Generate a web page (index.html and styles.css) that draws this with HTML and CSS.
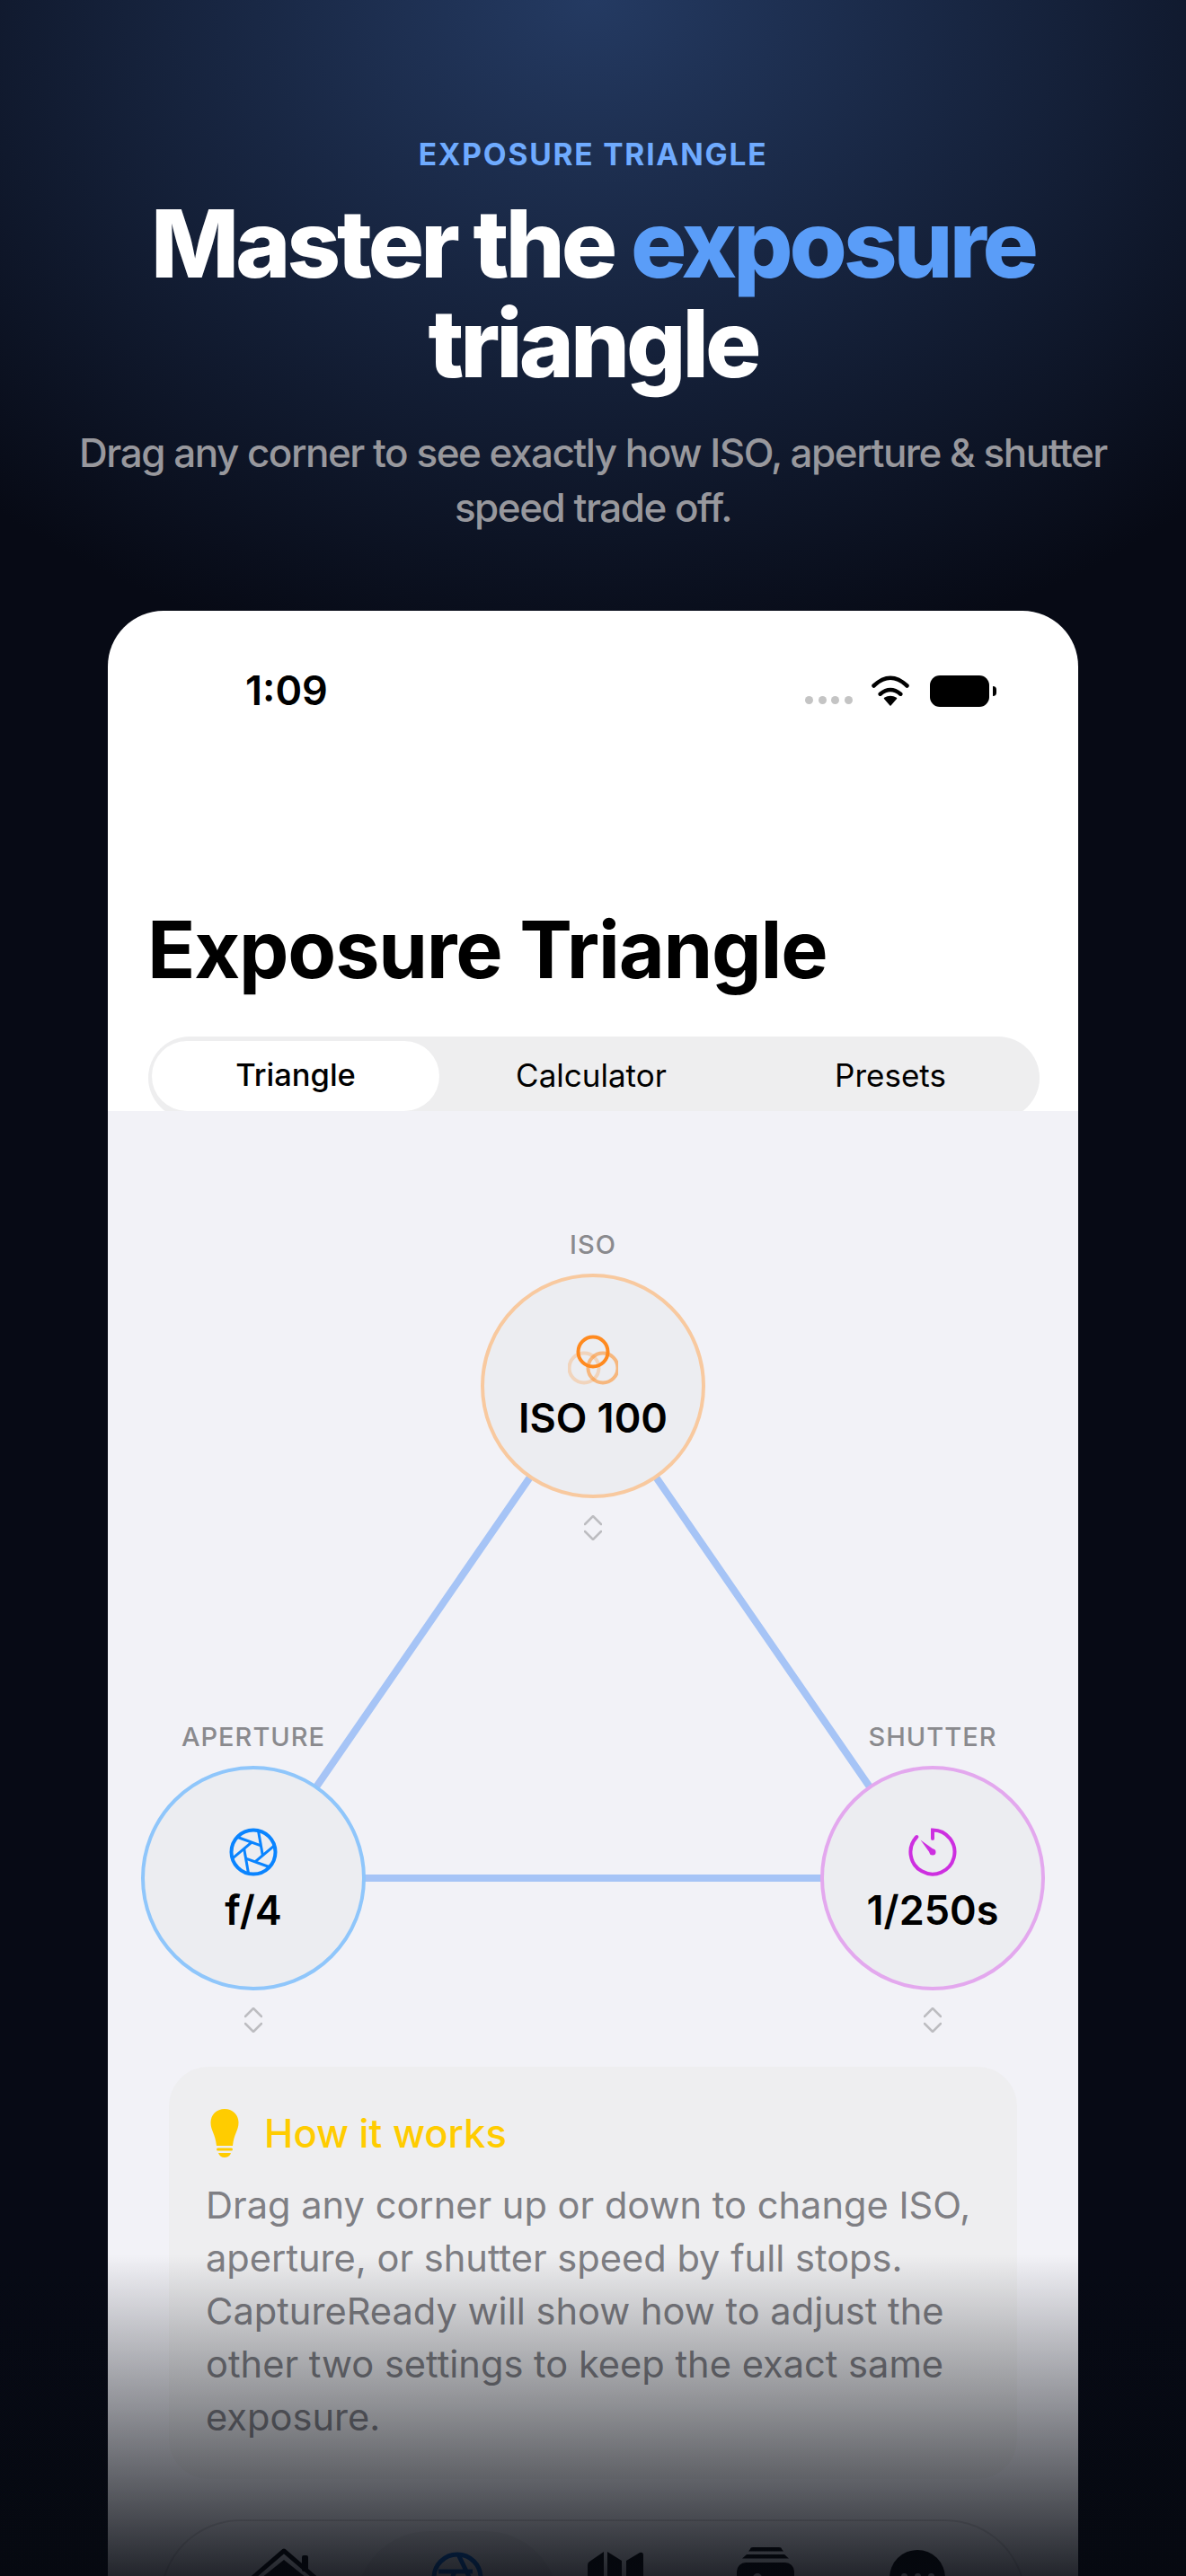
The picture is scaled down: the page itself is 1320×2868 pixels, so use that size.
FILE: index.html
```html
<!DOCTYPE html>
<html lang="en">

<head>
    <meta charset="UTF-8">
    <meta name="viewport" content="width=device-width, initial-scale=1.0">
    <title>Exposure Triangle</title>
    <link rel="stylesheet" href="styles.css">
</head>

<body>
    <div class="screen">
        <header class="hero">
            <div class="eyebrow">EXPOSURE TRIANGLE</div>
            <h1>Master the <span>exposure</span><br>triangle</h1>
            <p>Drag any corner to see exactly how ISO, aperture &amp; shutter<br>speed trade off.</p>
        </header>

        <div class="phone">
            <div class="status">
                <div class="time">1:09</div>
                <div class="status-icons">
                    <div class="dots"><i></i><i></i><i></i><i></i></div>
                    <svg class="wifi" width="44" height="36" viewBox="0 0 44 36">
                        <path d="M3.5 12.5Q22-5 40.500 12.500M10.700 21.700Q22 12.300 33.300 21.700" fill="none" stroke="#000" stroke-width="4.500" stroke-linecap="round"/>
                        <path d="M15.500 26.500Q22 22.500 28.500 26.500L22 34Z" stroke="#000" stroke-width="1.500" stroke-linejoin="round"/>
                    </svg>
                    <div class="battery"></div>
                </div>
            </div>

            <div class="page-title">Exposure Triangle</div>

            <div class="segments">
                <div class="segment seg-one active">Triangle</div>
                <div class="segment seg-two">Calculator</div>
                <div class="segment seg-three">Presets</div>
            </div>

            <div class="content">
                <div class="triangle">
                    <svg class="lines" width="1080" height="1064" viewBox="0 0 1080 1064">
                        <path d="M540 306L162 854H918Z" fill="none" stroke="#a6c4f6" stroke-width="8"/>
                    </svg>

                    <div class="node node-iso">
                        <div class="node-label">ISO</div>
                        <div class="circle">
                            <svg class="icon" width="56" height="56" viewBox="0 0 56 56" fill="none" stroke="#ff8a1f" stroke-width="4">
                                <circle cx="18" cy="37" r="16.500" opacity=".25"/>
                                <circle cx="39" cy="37" r="16.500" opacity=".55"/>
                                <circle cx="28" cy="19" r="16.500"/>
                            </svg>
                            <div class="value">ISO 100</div>
                        </div>
                        <svg class="updown" width="20" height="28" viewBox="0 0 20 28" fill="none" stroke="#bdbdc1" stroke-width="2.500" stroke-linecap="round" stroke-linejoin="round">
                            <path d="M1 10L10 1L19 10M1 18L10 27L19 18"/>
                        </svg>
                    </div>

                    <div class="node node-aperture">
                        <div class="node-label">APERTURE</div>
                        <div class="circle circle-blue">
                            <svg class="icon" width="56" height="56" viewBox="0 0 56 56" fill="none" stroke="#0a84ff" stroke-width="3">
                                <circle cx="28" cy="28" r="24.500" stroke-width="4"/>
                                <g transform="rotate(20 28 28)">
                                    <path d="M47.260 13.700L33.500 37.530"/>
                                    <path transform="rotate(60 28 28)" d="M47.260 13.700L33.500 37.530"/>
                                    <path transform="rotate(120 28 28)" d="M47.260 13.700L33.500 37.530"/>
                                    <path transform="rotate(180 28 28)" d="M47.260 13.700L33.500 37.530"/>
                                    <path transform="rotate(240 28 28)" d="M47.260 13.700L33.500 37.530"/>
                                    <path transform="rotate(300 28 28)" d="M47.260 13.700L33.500 37.530"/>
                                </g>
                            </svg>
                            <div class="value">f/4</div>
                        </div>
                        <svg class="updown" width="20" height="28" viewBox="0 0 20 28" fill="none" stroke="#bdbdc1" stroke-width="2.500" stroke-linecap="round" stroke-linejoin="round">
                            <path d="M1 10L10 1L19 10M1 18L10 27L19 18"/>
                        </svg>
                    </div>

                    <div class="node node-shutter">
                        <div class="node-label">SHUTTER</div>
                        <div class="circle circle-purple">
                            <svg class="icon" width="56" height="56" viewBox="0 0 56 56" fill="none" stroke="#cd2fe0" stroke-width="4" stroke-linecap="round">
                                <path d="M28 13V3.500A24.500 24.500 0 1 1 10.300 11"/>
                                <path d="M14.500 14.500L30.500 26L26 30.500Z" fill="#cd2fe0" stroke="none"/>
                                <circle cx="28" cy="28" r="3.500" fill="#cd2fe0" stroke="none"/>
                            </svg>
                            <div class="value">1/250s</div>
                        </div>
                        <svg class="updown" width="20" height="28" viewBox="0 0 20 28" fill="none" stroke="#bdbdc1" stroke-width="2.500" stroke-linecap="round" stroke-linejoin="round">
                            <path d="M1 10L10 1L19 10M1 18L10 27L19 18"/>
                        </svg>
                    </div>
                </div>

                <div class="card">
                    <div class="card-head">
                        <svg width="32" height="54" viewBox="0 0 32 54" fill="#ffcc00">
                            <path d="M16 0C7 0 .5 6.500 .5 15C.5 24 5.500 27 7 41H25C26.500 27 31.500 24 31.500 15C31.500 6.500 25 0 16 0Z"/>
                            <rect x="7" y="43.500" width="18" height="3" rx="1.500"/>
                            <path d="M9 49H23C22 52 19.500 54 16 54S10 52 9 49Z"/>
                        </svg>
                        <div class="card-title">How it works</div>
                    </div>
                    <div class="card-text">Drag any corner up or down to change ISO, aperture, or shutter speed by full stops. CaptureReady will show how to adjust the other two settings to keep the exact same exposure.</div>
                </div>

                <div class="tabbar">
                    <div class="tab tab-home">
                        <svg width="72" height="70" viewBox="0 0 72 70">
                            <path d="M0 34L36 3L72 34" fill="none" stroke="#000" stroke-width="5" stroke-linejoin="round"/>
                            <rect x="56" y="8" width="7" height="18" rx="2"/>
                            <path d="M36 13L66 37V70H6V37Z"/>
                        </svg>
                    </div>
                    <div class="tab tab-active">
                        <svg width="58" height="58" viewBox="0 0 58 58" fill="none" stroke="#0060d0" stroke-width="5">
                            <circle cx="29" cy="29" r="26"/>
                            <path d="M8 22H46M30 3L46 36M26 22L16 50"/>
                        </svg>
                    </div>
                    <div class="tab tab-map">
                        <svg width="62" height="60" viewBox="0 0 62 60">
                            <path d="M0 15Q0 12 2 11L18 0V60H0ZM22 0L38 10V60H22ZM43 10L58 1Q62 0 62 4V60H43Z"/>
                        </svg>
                    </div>
                    <div class="tab tab-stack">
                        <svg width="64" height="60" viewBox="0 0 64 60">
                            <path d="M15 2Q15 0 18 0H47Q50 0 50 2L52 4.500H13ZM11 8H53L58 12.500H6Z"/>
                            <rect x="0" y="17" width="64" height="46" rx="10"/>
                            <circle cx="23" cy="34" r="5" fill="#f2f2f7"/>
                        </svg>
                    </div>
                    <div class="tab tab-more">
                        <div class="more-circle"><i></i><i></i><i></i></div>
                    </div>
                </div>
            </div>
        </div>

        <div class="fade"></div>
    </div>
</body>

</html>
```

FILE: styles.css
```css
* {
    box-sizing: border-box;
}

html,
body {
    margin: 0;
    padding: 0;
}

body {
    font-family: Inter, "Liberation Sans", sans-serif;
    color: #000;
}

.screen {
    position: relative;
    width: 1320px;
    height: 2868px;
    overflow: hidden;
    background: #05080f radial-gradient(ellipse 1000px 760px at 50% 0, #243a62, #070a15 100%) no-repeat;
}

/* hero */
.hero {
    padding-top: 151px;
    height: 680px;
    text-align: center;
}

.eyebrow {
    height: 42px;
    font-size: 33.500px;
    line-height: 42px;
    font-weight: 700;
    letter-spacing: 1.800px;
    color: #6fabff;
}

.hero h1 {
    margin: 23px 0 0;
    font-size: 104px;
    line-height: 111px;
    font-weight: 800;
    letter-spacing: -4px;
    color: #fff;
}

.hero h1 span {
    color: #5a9df8;
}

.hero p {
    margin: 36px 0 0;
    font-size: 44px;
    line-height: 61px;
    font-weight: 500;
    letter-spacing: -1.500px;
    color: #98989d;
}

/* phone */
.phone {
    width: 1080px;
    margin: 0 auto;
    background: #fff;
    border-radius: 62px 62px 0 0;
    overflow: hidden;
}

.status {
    display: flex;
    justify-content: space-between;
    align-items: flex-start;
    height: 324px;
    padding: 66px 99px 0 153px;
}

.time {
    font-size: 45px;
    line-height: 46px;
    font-weight: 600;
}

.status-icons {
    display: flex;
    align-items: flex-start;
    padding-top: 5px;
}

.dots {
    display: flex;
    gap: 5.600px;
    margin: 24px 20px 0 0;
}

.dots i {
    width: 9px;
    height: 9px;
    border-radius: 50%;
    background: #c4c4c4;
}

.wifi {
    margin-right: 22px;
}

.battery {
    position: relative;
    width: 66px;
    height: 35px;
    margin-top: 1px;
    border-radius: 11px;
    background: #000;
}

.battery::after {
    content: "";
    position: absolute;
    left: 70px;
    top: 12px;
    width: 4px;
    height: 11px;
    border-radius: 0 4px 4px 0;
    background: #000;
}

.page-title {
    height: 150px;
    padding-left: 44px;
    font-size: 88px;
    line-height: 106px;
    font-weight: 700;
    letter-spacing: -1.200px;
}

.segments {
    display: flex;
    width: 992px;
    height: 92px;
    margin: 0 0 -9px 45px;
    padding: 5px 4px;
    border-radius: 46px;
    background: #eeeeef;
}

.segment {
    flex: none;
    height: 78px;
    border-radius: 39px;
    font-size: 35px;
    line-height: 76px;
    font-weight: 400;
    text-align: center;
}

.seg-one {
    width: 320px;
}

.seg-two {
    width: 338px;
}

.seg-three {
    width: 328px;
}

.segment.active {
    font-size: 34.500px;
    font-weight: 500;
    background: #fff;
}

/* grey area */
.content {
    position: relative;
    height: 1700px;
    background: #f2f2f7;
}

.triangle {
    position: relative;
    height: 1064px;
}

.lines {
    position: absolute;
    left: 0;
    top: 0;
}

.node {
    position: absolute;
    display: flex;
    flex-direction: column;
    align-items: center;
    width: 250px;
}

.node-iso {
    left: 415px;
    top: 129px;
}

.node-aperture {
    left: 37px;
    top: 677px;
}

.node-shutter {
    left: 793px;
    top: 677px;
}

.node-label {
    height: 40px;
    margin-bottom: 12px;
    font-size: 29px;
    line-height: 40px;
    font-weight: 500;
    letter-spacing: 1px;
    color: #8a8a8e;
}

.circle {
    display: flex;
    flex-direction: column;
    align-items: center;
    flex: none;
    width: 250px;
    height: 250px;
    padding-top: 64px;
    border: 4px solid #f8c99f;
    border-radius: 50%;
    background: #ecedf1;
}

.circle-blue {
    border-color: #8fc6fb;
}

.circle-purple {
    border-color: #e3a8ee;
}

.icon {
    flex: none;
}

.value {
    margin-top: 11px;
    font-size: 45px;
    line-height: 52px;
    font-weight: 600;
    white-space: nowrap;
}

.updown {
    margin-top: 19px;
}

.card {
    width: 944px;
    height: 459px;
    margin-left: 68px;
    padding: 47px 40px 0 41px;
    border-radius: 44px;
    background: #eeeef0;
}

.card-head {
    display: flex;
    align-items: center;
    gap: 28px;
    padding-left: 5px;
}

.card-title {
    font-size: 43.500px;
    line-height: 54px;
    font-weight: 500;
    color: #ffcc00;
}

.card-text {
    margin-top: 24px;
    font-size: 41.600px;
    line-height: 59px;
    color: #7f7f84;
}

/* tab bar, cut off by the page bottom */
.tabbar {
    display: flex;
    align-items: flex-start;
    width: 964px;
    height: 220px;
    margin: 45px 0 0 58px;
    padding: 11px 0 0 56px;
    border: 2px solid rgba(0, 0, 0, .12);
    border-radius: 90px;
    background: rgba(255, 255, 255, .04);
}

.tab {
    display: flex;
    justify-content: center;
    flex: none;
    height: 180px;
}

.tab-home {
    width: 160px;
    padding-top: 19px;
}

.tab-active {
    width: 226px;
    padding-top: 23px;
    border-radius: 82px;
    background: rgba(0, 0, 0, .05);
}

.tab-map {
    width: 126px;
    padding-top: 23px;
}

.tab-stack {
    width: 208px;
    padding-top: 18px;
}

.tab-more {
    width: 130px;
    padding-top: 21px;
}

.more-circle {
    display: flex;
    justify-content: center;
    gap: 8px;
    width: 62px;
    height: 62px;
    padding-top: 26px;
    border-radius: 50%;
    background: #000;
}

.more-circle i {
    width: 7px;
    height: 7px;
    border-radius: 50%;
    background: #f2f2f7;
}

/* dark fade over the bottom of the screenshot */
.fade {
    position: absolute;
    left: 0;
    bottom: 0;
    width: 100%;
    height: 358px;
    background: linear-gradient(rgba(6, 9, 16, 0), rgba(6, 9, 16, .88));
}
```
